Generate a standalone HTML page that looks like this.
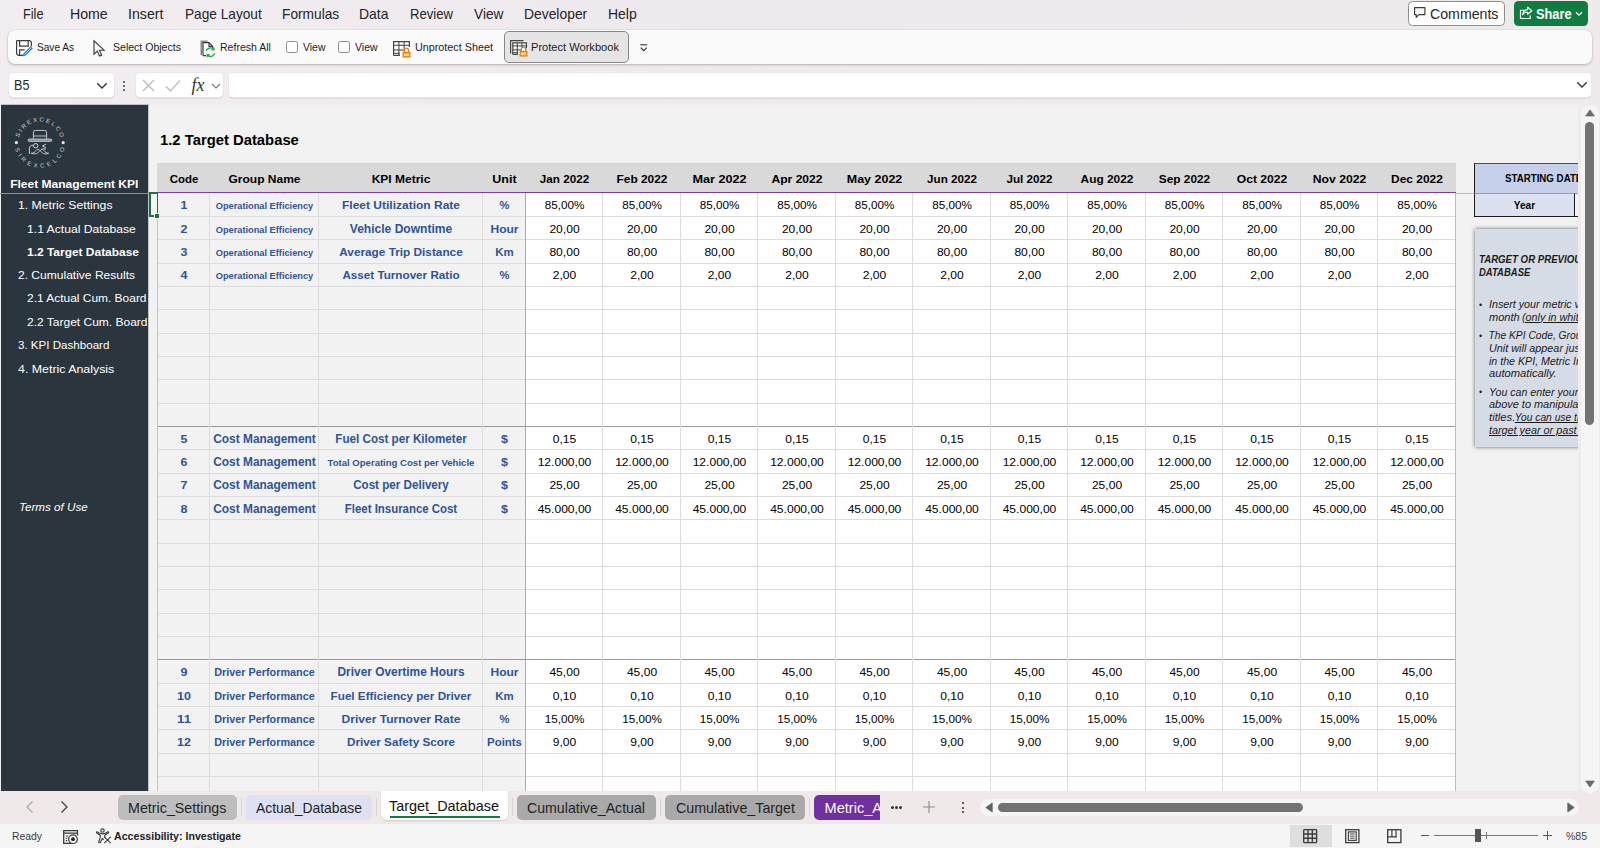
<!DOCTYPE html><html><head><meta charset="utf-8"><title>Fleet Management KPI - Target Database</title><style>
html,body{margin:0;padding:0}
body{width:1600px;height:848px;overflow:hidden;position:relative;background:#efeaec;font-family:"Liberation Sans",sans-serif;}
div{position:absolute;box-sizing:border-box}
svg{position:absolute;overflow:visible}
.t{white-space:pre;overflow:visible}
</style></head><body>
<div style="left:0px;top:0px;width:1600px;height:105px;background:linear-gradient(90deg,#f1edf0 0%,#eee9ed 45%,#efeaeb 100%);"></div>
<div class="t" style="left:22.5px;top:3px;width:100px;height:22px;line-height:22px;font-size:14.4px;color:#242424;transform:scaleX(0.8835);transform-origin:0 50%;">File</div>
<div class="t" style="left:70.25px;top:3px;width:100px;height:22px;line-height:22px;font-size:14.4px;color:#242424;transform:scaleX(0.9827);transform-origin:0 50%;">Home</div>
<div class="t" style="left:128.25px;top:3px;width:100px;height:22px;line-height:22px;font-size:14.4px;color:#242424;transform:scaleX(0.9857);transform-origin:0 50%;">Insert</div>
<div class="t" style="left:184.5px;top:3px;width:100px;height:22px;line-height:22px;font-size:14.4px;color:#242424;transform:scaleX(0.9491);transform-origin:0 50%;">Page Layout</div>
<div class="t" style="left:282px;top:3px;width:100px;height:22px;line-height:22px;font-size:14.4px;color:#242424;transform:scaleX(0.9539);transform-origin:0 50%;">Formulas</div>
<div class="t" style="left:359.25px;top:3px;width:100px;height:22px;line-height:22px;font-size:14.4px;color:#242424;transform:scaleX(0.9698);transform-origin:0 50%;">Data</div>
<div class="t" style="left:409.5px;top:3px;width:100px;height:22px;line-height:22px;font-size:14.4px;color:#242424;transform:scaleX(0.9107);transform-origin:0 50%;">Review</div>
<div class="t" style="left:473.75px;top:3px;width:100px;height:22px;line-height:22px;font-size:14.4px;color:#242424;transform:scaleX(0.9531);transform-origin:0 50%;">View</div>
<div class="t" style="left:523.75px;top:3px;width:100px;height:22px;line-height:22px;font-size:14.4px;color:#242424;transform:scaleX(0.9636);transform-origin:0 50%;">Developer</div>
<div class="t" style="left:607.5px;top:3px;width:100px;height:22px;line-height:22px;font-size:14.4px;color:#242424;transform:scaleX(0.9707);transform-origin:0 50%;">Help</div>
<div style="left:1407.5px;top:1px;width:97.5px;height:25px;background:#fff;border:1px solid #8f8f8f;border-radius:4.5px;"></div>
<svg style="left:1412.5px;top:6px" width="14" height="14" viewBox="0 0 14 14"><path d="M1.6 1.6h10.300v7h-6l-2.700 2.700v-2.700h-1.600z" fill="none" stroke="#3a3a3a" stroke-width="1.15" stroke-linejoin="round"/></svg>
<div class="t" style="left:1429.5px;top:3px;width:80px;height:22px;line-height:22px;font-size:14.4px;color:#262626;transform:scaleX(0.9839);transform-origin:0 50%;">Comments</div>
<div style="left:1513.5px;top:1px;width:74.5px;height:25px;background:#107c41;border-radius:4.5px;"></div>
<svg style="left:1518px;top:5px" width="16" height="16" viewBox="0 0 16 16"><path d="M6.2 5.2h-3.7v8.3h9.7v-3.2" fill="none" stroke="#fff" stroke-width="1.15" stroke-linejoin="round"/><path d="M9.6 2.2l4.3 3.5-4.3 3.5v-2.1c-2.4 0-3.9.8-4.9 2.6.3-3.2 2-5 4.9-5.3z" fill="none" stroke="#fff" stroke-width="1.15" stroke-linejoin="round"/></svg>
<div class="t" style="left:1535.5px;top:3px;width:40px;height:22px;line-height:22px;font-size:14.4px;color:#fff;font-weight:700;transform:scaleX(0.8870);transform-origin:0 50%;">Share</div>
<svg style="left:1575px;top:10.5px" width="8" height="6" viewBox="0 0 8 6"><path d="M1 1.2l3 3 3-3" fill="none" stroke="#fff" stroke-width="1.3"/></svg>
<div style="left:8px;top:30px;width:1584px;height:34px;background:#fbfafa;border-radius:7px;box-shadow:0 1px 2.5px rgba(60,30,40,.28),0 0 1px rgba(60,30,40,.2);"></div>
<div style="left:504px;top:31px;width:125px;height:32px;background:#e5e5e5;border:1px solid #868686;border-radius:5px;"></div>
<div class="t" style="left:36.9px;top:36px;width:140px;height:22px;line-height:22px;font-size:10.9px;color:#1c1c1c;transform:scaleX(0.9277);transform-origin:0 50%;">Save As</div>
<div class="t" style="left:112.5px;top:36px;width:140px;height:22px;line-height:22px;font-size:10.9px;color:#1c1c1c;transform:scaleX(0.9676);transform-origin:0 50%;">Select Objects</div>
<div class="t" style="left:219.6px;top:36px;width:140px;height:22px;line-height:22px;font-size:10.9px;color:#1c1c1c;transform:scaleX(0.9676);transform-origin:0 50%;">Refresh All</div>
<div class="t" style="left:302.5px;top:36px;width:140px;height:22px;line-height:22px;font-size:10.9px;color:#1c1c1c;transform:scaleX(0.9603);transform-origin:0 50%;">View</div>
<div class="t" style="left:355px;top:36px;width:140px;height:22px;line-height:22px;font-size:10.9px;color:#1c1c1c;transform:scaleX(0.9646);transform-origin:0 50%;">View</div>
<div class="t" style="left:414.5px;top:36px;width:140px;height:22px;line-height:22px;font-size:10.9px;color:#1c1c1c;transform:scaleX(0.9902);transform-origin:0 50%;">Unprotect Sheet</div>
<div class="t" style="left:531px;top:36px;width:140px;height:22px;line-height:22px;font-size:10.9px;color:#1c1c1c;transform:scaleX(1.0182);transform-origin:0 50%;">Protect Workbook</div>
<svg style="left:16px;top:40px" width="17" height="17" viewBox="0 0 17 17"><path d="M0.6 0.6h13.2l1.6 1.6v4.2M8 15.4H2.2L0.6 13.8V0.6" fill="none" stroke="#3b3b3b" stroke-width="1.2" stroke-linejoin="round"/><path d="M3.6 0.6v5.6h8.6V0.6" fill="none" stroke="#3b3b3b" stroke-width="1.2"/><path d="M3.6 15.2v-5.4h5" fill="none" stroke="#3b3b3b" stroke-width="1.2"/><path d="M6.6 16.4l1-3.2 7-7 2.2 2.2-7 7z" fill="#2b88d8"/><path d="M8.6 14.4l6.6-6.6" stroke="#d9ecfb" stroke-width="0.7"/></svg>
<svg style="left:93px;top:40px" width="13" height="17" viewBox="0 0 13 17"><path d="M1 0.9v13.2l3.3-3 2.2 5 2.2-1-2.2-4.9h4.6z" fill="none" stroke="#3b3b3b" stroke-width="1.15" stroke-linejoin="miter"/></svg>
<svg style="left:200px;top:40px" width="16" height="18" viewBox="0 0 16 18"><path d="M0.5 0.5h7v1.6H2.3v13.2H0.5z" fill="#8a8a8a"/><path d="M3 15.6V2.6h6l3.6 3.6v2.2M9 2.6v3.8h3.6M3 15.6h3" fill="none" stroke="#3b3b3b" stroke-width="1.15"/><path d="M6.2 11.2a4.3 4.3 0 0 1 7.6-1.6M13.9 7.2v2.6h-2.6M14.8 13.2a4.3 4.3 0 0 1-7.6 1.6M7.1 17.2v-2.6h2.6" fill="none" stroke="#2ea44f" stroke-width="1.3"/></svg>
<div style="left:286px;top:41px;width:12px;height:12px;background:#fff;border:1px solid #8c8c8c;border-radius:2.5px;"></div>
<div style="left:338px;top:41px;width:12px;height:12px;background:#fff;border:1px solid #8c8c8c;border-radius:2.5px;"></div>
<svg style="left:393px;top:41px" width="18" height="17" viewBox="0 0 18 17"><g transform="translate(0,0)"><rect x="0.6" y="0.6" width="15.8" height="13.8" fill="#fff"/><path d="M0.6 14.4V0.6H16.4V6M0.6 14.4H7.0" fill="none" stroke="#454545" stroke-width="1.25"/><path d="M5.9 0.6V14.4M11.1 0.6V8" stroke="#454545" stroke-width="1.05"/><path d="M0.6 4.3H16.4" stroke="#454545" stroke-width="1.05"/><path d="M0.6 9.0H11.1" stroke="#454545" stroke-width="1.05"/><path d="M0.6 12.3H6.9" stroke="#454545" stroke-width="1.05"/></g><path d="M11.300 11.500V9.200a2.150 2.150 0 0 1 4.300 0v2.300" fill="#fff" stroke="#e8780c" stroke-width="1.35"/><rect x="10.200" y="11.600" width="6.600" height="4.300" fill="#fbd98a" stroke="#e8780c" stroke-width="1.3"/></svg>
<svg style="left:510px;top:40px" width="18" height="17" viewBox="0 0 18 17"><path d="M0.6 13.500V0.6H13.500" fill="none" stroke="#454545" stroke-width="1.2"/><g transform="translate(2.2,2.2)"><rect x="0.6" y="0.6" width="13.6" height="11.6" fill="#fff"/><path d="M0.6 12.2V0.6H14.2V6M0.6 12.2H5.9" fill="none" stroke="#454545" stroke-width="1.25"/><path d="M5.1 0.6V12.2M9.7 0.6V8" stroke="#454545" stroke-width="1.05"/><path d="M0.6 3.7H14.2" stroke="#454545" stroke-width="1.05"/><path d="M0.6 7.7H9.7" stroke="#454545" stroke-width="1.05"/><path d="M0.6 10.5H6.1" stroke="#454545" stroke-width="1.05"/></g><path d="M11.300 11.500V9.200a2.150 2.150 0 0 1 4.300 0v2.300" fill="#fff" stroke="#e8780c" stroke-width="1.35"/><rect x="10.200" y="11.600" width="6.600" height="4.300" fill="#fbd98a" stroke="#e8780c" stroke-width="1.3"/></svg>
<svg style="left:640px;top:43.5px" width="8" height="8" viewBox="0 0 8 8"><path d="M0.3 0.8h6.900" stroke="#333" stroke-width="1.1"/><path d="M0.700 3.600l3.050 3.050 3.050-3.050" fill="none" stroke="#333" stroke-width="1.2"/></svg>
<div style="left:9px;top:73px;width:104.5px;height:24px;background:#fff;border-radius:4px;box-shadow:0 0 0 1px #ebe6e7,0 1px 0 0.5px #cbc6c7;"></div>
<div class="t" style="left:14.3px;top:75px;width:40px;height:22px;line-height:22px;font-size:13.8px;color:#262626;transform:scaleX(0.9123);transform-origin:0 50%;">B5</div>
<svg style="left:96px;top:82px" width="12" height="8" viewBox="0 0 12 8"><path d="M1.2 1.2l4.8 4.8 4.8-4.8" fill="none" stroke="#333" stroke-width="1.3"/></svg>
<div style="left:123px;top:81px;width:2.2px;height:2.2px;background:#444;border-radius:1.1px;"></div>
<div style="left:123px;top:85px;width:2.2px;height:2.2px;background:#444;border-radius:1.1px;"></div>
<div style="left:123px;top:89px;width:2.2px;height:2.2px;background:#444;border-radius:1.1px;"></div>
<div style="left:136px;top:73px;width:87px;height:24px;background:#fff;border-radius:4px;box-shadow:0 0 0 1px #ebe6e7,0 1px 0 0.5px #cbc6c7;"></div>
<svg style="left:142px;top:79px" width="13" height="13" viewBox="0 0 13 13"><path d="M1 1l11 11M12 1L1 12" fill="none" stroke="#b9b9b9" stroke-width="1.2"/></svg>
<svg style="left:165px;top:79px" width="16" height="13" viewBox="0 0 16 13"><path d="M1 7.5l4.5 4.5L15 1.5" fill="none" stroke="#b9b9b9" stroke-width="1.2"/></svg>
<div class="t" style="left:191.5px;top:73px;width:20px;height:24px;line-height:24px;font-size:18px;color:#333;font-style:italic;font-family:'Liberation Serif',serif;">fx</div>
<svg style="left:211px;top:83px" width="10" height="7" viewBox="0 0 10 7"><path d="M1 1l4 4 4-4" fill="none" stroke="#777" stroke-width="1.1"/></svg>
<div style="left:229px;top:73px;width:1362px;height:24px;background:#fff;border-radius:4px;box-shadow:0 0 0 1px #ebe6e7,0 1px 0 0.5px #cbc6c7;"></div>
<svg style="left:1576px;top:81px" width="12" height="8" viewBox="0 0 12 8"><path d="M1.2 1.2l4.8 4.8 4.8-4.8" fill="none" stroke="#333" stroke-width="1.3"/></svg>
<div style="left:0px;top:105px;width:1578px;height:686px;background:#f2f2f2;"></div>
<div style="left:1px;top:104px;width:148px;height:1px;background:#c3c2c6;"></div>
<div style="left:149px;top:104px;width:1429px;height:1px;background:#f1eeef;"></div>
<div style="left:148px;top:105px;width:1px;height:686px;background:#c2c5c8;"></div>
<div style="left:1px;top:105px;width:147px;height:686px;background:#2b353e;"></div>
<div style="left:0px;top:193px;width:149px;height:1px;background:#8c9094;"></div>
<svg style="left:0;top:0" width="150" height="200" viewBox="0 0 150 200"><defs><path id="arcT" d="M18.70 142.60A21.1 21.1 0 0 1 60.90 142.60"/><path id="arcB" d="M14.60 142.60A25.20 25.20 0 0 0 65.00 142.60"/></defs><text font-family="Liberation Sans, sans-serif" font-size="5.9" fill="#cfd3d6" letter-spacing="1.95" text-anchor="middle"><textPath href="#arcT" startOffset="51.3%">SIREXCELCO</textPath></text><text font-family="Liberation Sans, sans-serif" font-size="5.9" fill="#cfd3d6" letter-spacing="3.25" text-anchor="middle"><textPath href="#arcB" startOffset="52.6%">SIREXCELCO</textPath></text><circle cx="16.4" cy="142.6" r="1.6" fill="#e6e8ea"/><circle cx="63.199999999999996" cy="142.6" r="1.6" fill="#e6e8ea"/><path d="M33.4 138.8v-6.6a1.8 1.8 0 0 1 1.8-1.8h9.6a1.8 1.8 0 0 1 1.8 1.8v6.6M33.4 136h13.2" fill="none" stroke="#cfd3d6" stroke-width="0.9"/><rect x="28" y="139" width="23.8" height="2.4" rx="1.2" fill="#8d949a" stroke="#cfd3d6" stroke-width="0.8"/><circle cx="35.7" cy="145.7" r="2.2" fill="none" stroke="#cfd3d6" stroke-width="1"/><path d="M33.5 145.3c-2.700-.3-4.100 1-4.100 3.400v5.300" fill="none" stroke="#cfd3d6" stroke-width="1"/><path d="M45.900 144.200l-3.400 1.800 3.400 1.800M42.800 148.600l3 .6" fill="none" stroke="#cfd3d6" stroke-width="1"/><path d="M39.500 150.600c-.6 2.400-4.400 4.400-8.200 2.600 2.200 0 3.600-1 4.600-2.600 1.200-1.800 3.200-1.800 3.600 0zM40.500 150.600c.6 2.400 4.400 4.400 8.200 2.600-2.200 0-3.600-1-4.600-2.600-1.200-1.800-3.200-1.800-3.600 0z" fill="none" stroke="#cfd3d6" stroke-width="0.9" stroke-linejoin="round"/></svg>
<div class="t" style="left:0px;top:174px;width:148.5px;height:20px;line-height:20px;font-size:11.44px;color:#fff;text-align:center;font-weight:700;transform:scaleX(1.0506);transform-origin:50% 50%;">Fleet Management KPI</div>
<div class="t" style="left:17.9px;top:194px;width:130px;height:23px;line-height:23px;font-size:11.44px;color:#fff;transform:scaleX(1.0695);transform-origin:0 50%;">1. Metric Settings</div>
<div class="t" style="left:27.2px;top:218px;width:130px;height:23px;line-height:23px;font-size:11.44px;color:#fff;transform:scaleX(1.0623);transform-origin:0 50%;">1.1 Actual Database</div>
<div class="t" style="left:27.2px;top:241px;width:130px;height:23px;line-height:23px;font-size:11.44px;color:#fff;font-weight:700;transform:scaleX(1.0445);transform-origin:0 50%;">1.2 Target Database</div>
<div class="t" style="left:17.9px;top:264px;width:130px;height:23px;line-height:23px;font-size:11.44px;color:#fff;transform:scaleX(1.0517);transform-origin:0 50%;">2. Cumulative Results</div>
<div class="t" style="left:27.2px;top:287px;width:130px;height:23px;line-height:23px;font-size:11.44px;color:#fff;transform:scaleX(1.0442);transform-origin:0 50%;">2.1 Actual Cum. Board</div>
<div class="t" style="left:27.2px;top:311px;width:130px;height:23px;line-height:23px;font-size:11.44px;color:#fff;transform:scaleX(1.0491);transform-origin:0 50%;">2.2 Target Cum. Board</div>
<div class="t" style="left:17.8px;top:334px;width:130px;height:23px;line-height:23px;font-size:11.44px;color:#fff;transform:scaleX(1.0124);transform-origin:0 50%;">3. KPI Dashboard</div>
<div class="t" style="left:17.8px;top:358px;width:130px;height:23px;line-height:23px;font-size:11.44px;color:#fff;transform:scaleX(1.0822);transform-origin:0 50%;">4. Metric Analysis</div>
<div class="t" style="left:18.5px;top:496px;width:100px;height:22px;line-height:22px;font-size:11.44px;color:#fff;font-style:italic;transform:scaleX(1.0160);transform-origin:0 50%;">Terms of Use</div>
<div class="t" style="left:160px;top:128px;width:200px;height:24px;line-height:24px;font-size:14.64px;color:#000;font-weight:700;transform:scaleX(1.0128);transform-origin:0 50%;">1.2 Target Database</div>
<div style="left:525px;top:193px;width:930px;height:598px;background:#fff;"></div>
<div style="left:157px;top:163px;width:1299px;height:30px;background:#d9d9d9;"></div>
<div style="left:157px;top:192px;width:1299px;height:1px;background:#7a3fa6;"></div>
<div class="t" style="left:158px;top:167px;width:52px;height:24px;line-height:24px;font-size:11.44px;color:#000;text-align:center;font-weight:700;">Code</div>
<div class="t" style="left:210px;top:167px;width:109px;height:24px;line-height:24px;font-size:11.44px;color:#000;text-align:center;font-weight:700;transform:scaleX(1.0495);transform-origin:50% 50%;">Group Name</div>
<div class="t" style="left:319px;top:167px;width:164px;height:24px;line-height:24px;font-size:11.44px;color:#000;text-align:center;font-weight:700;transform:scaleX(1.0496);transform-origin:50% 50%;">KPI Metric</div>
<div class="t" style="left:483px;top:167px;width:43px;height:24px;line-height:24px;font-size:11.44px;color:#000;text-align:center;font-weight:700;transform:scaleX(1.0919);transform-origin:50% 50%;">Unit</div>
<div class="t" style="left:526px;top:167px;width:77px;height:24px;line-height:24px;font-size:11.44px;color:#000;text-align:center;font-weight:700;transform:scaleX(1.0191);transform-origin:50% 50%;">Jan 2022</div>
<div class="t" style="left:603px;top:167px;width:78px;height:24px;line-height:24px;font-size:11.44px;color:#000;text-align:center;font-weight:700;transform:scaleX(1.0403);transform-origin:50% 50%;">Feb 2022</div>
<div class="t" style="left:681px;top:167px;width:77px;height:24px;line-height:24px;font-size:11.44px;color:#000;text-align:center;font-weight:700;transform:scaleX(1.1066);transform-origin:50% 50%;">Mar 2022</div>
<div class="t" style="left:758px;top:167px;width:78px;height:24px;line-height:24px;font-size:11.44px;color:#000;text-align:center;font-weight:700;transform:scaleX(1.0579);transform-origin:50% 50%;">Apr 2022</div>
<div class="t" style="left:836px;top:167px;width:77px;height:24px;line-height:24px;font-size:11.44px;color:#000;text-align:center;font-weight:700;transform:scaleX(1.0919);transform-origin:50% 50%;">May 2022</div>
<div class="t" style="left:913px;top:167px;width:78px;height:24px;line-height:24px;font-size:11.44px;color:#000;text-align:center;font-weight:700;transform:scaleX(1.0180);transform-origin:50% 50%;">Jun 2022</div>
<div class="t" style="left:991px;top:167px;width:77px;height:24px;line-height:24px;font-size:11.44px;color:#000;text-align:center;font-weight:700;transform:scaleX(1.0161);transform-origin:50% 50%;">Jul 2022</div>
<div class="t" style="left:1068px;top:167px;width:78px;height:24px;line-height:24px;font-size:11.44px;color:#000;text-align:center;font-weight:700;transform:scaleX(1.0369);transform-origin:50% 50%;">Aug 2022</div>
<div class="t" style="left:1146px;top:167px;width:77px;height:24px;line-height:24px;font-size:11.44px;color:#000;text-align:center;font-weight:700;transform:scaleX(1.0346);transform-origin:50% 50%;">Sep 2022</div>
<div class="t" style="left:1223px;top:167px;width:78px;height:24px;line-height:24px;font-size:11.44px;color:#000;text-align:center;font-weight:700;transform:scaleX(1.0557);transform-origin:50% 50%;">Oct 2022</div>
<div class="t" style="left:1301px;top:167px;width:77px;height:24px;line-height:24px;font-size:11.44px;color:#000;text-align:center;font-weight:700;transform:scaleX(1.0633);transform-origin:50% 50%;">Nov 2022</div>
<div class="t" style="left:1378px;top:167px;width:78px;height:24px;line-height:24px;font-size:11.44px;color:#000;text-align:center;font-weight:700;transform:scaleX(1.0454);transform-origin:50% 50%;">Dec 2022</div>
<div style="left:157px;top:216px;width:1299px;height:1px;background:#dcdcdc;"></div>
<div style="left:157px;top:239px;width:1299px;height:1px;background:#dcdcdc;"></div>
<div style="left:157px;top:263px;width:1299px;height:1px;background:#dcdcdc;"></div>
<div style="left:157px;top:286px;width:1299px;height:1px;background:#dcdcdc;"></div>
<div style="left:157px;top:309px;width:1299px;height:1px;background:#dcdcdc;"></div>
<div style="left:157px;top:333px;width:1299px;height:1px;background:#dcdcdc;"></div>
<div style="left:157px;top:356px;width:1299px;height:1px;background:#dcdcdc;"></div>
<div style="left:157px;top:379px;width:1299px;height:1px;background:#dcdcdc;"></div>
<div style="left:157px;top:403px;width:1299px;height:1px;background:#dcdcdc;"></div>
<div style="left:157px;top:426px;width:1299px;height:1px;background:#9a9a9a;"></div>
<div style="left:157px;top:449px;width:1299px;height:1px;background:#dcdcdc;"></div>
<div style="left:157px;top:473px;width:1299px;height:1px;background:#dcdcdc;"></div>
<div style="left:157px;top:496px;width:1299px;height:1px;background:#dcdcdc;"></div>
<div style="left:157px;top:519px;width:1299px;height:1px;background:#dcdcdc;"></div>
<div style="left:157px;top:543px;width:1299px;height:1px;background:#dcdcdc;"></div>
<div style="left:157px;top:566px;width:1299px;height:1px;background:#dcdcdc;"></div>
<div style="left:157px;top:589px;width:1299px;height:1px;background:#dcdcdc;"></div>
<div style="left:157px;top:613px;width:1299px;height:1px;background:#dcdcdc;"></div>
<div style="left:157px;top:636px;width:1299px;height:1px;background:#dcdcdc;"></div>
<div style="left:157px;top:659px;width:1299px;height:1px;background:#9a9a9a;"></div>
<div style="left:157px;top:683px;width:1299px;height:1px;background:#dcdcdc;"></div>
<div style="left:157px;top:706px;width:1299px;height:1px;background:#dcdcdc;"></div>
<div style="left:157px;top:729px;width:1299px;height:1px;background:#dcdcdc;"></div>
<div style="left:157px;top:753px;width:1299px;height:1px;background:#dcdcdc;"></div>
<div style="left:157px;top:776px;width:1299px;height:1px;background:#dcdcdc;"></div>
<div style="left:157px;top:193px;width:1px;height:598px;background:#c4c4c4;"></div>
<div style="left:209px;top:193px;width:1px;height:598px;background:#dcdcdc;"></div>
<div style="left:318px;top:193px;width:1px;height:598px;background:#dcdcdc;"></div>
<div style="left:482px;top:193px;width:1px;height:598px;background:#dcdcdc;"></div>
<div style="left:525px;top:193px;width:1px;height:598px;background:#a9a9a9;"></div>
<div style="left:602px;top:193px;width:1px;height:598px;background:#dcdcdc;"></div>
<div style="left:680px;top:193px;width:1px;height:598px;background:#dcdcdc;"></div>
<div style="left:757px;top:193px;width:1px;height:598px;background:#dcdcdc;"></div>
<div style="left:835px;top:193px;width:1px;height:598px;background:#dcdcdc;"></div>
<div style="left:912px;top:193px;width:1px;height:598px;background:#dcdcdc;"></div>
<div style="left:990px;top:193px;width:1px;height:598px;background:#dcdcdc;"></div>
<div style="left:1067px;top:193px;width:1px;height:598px;background:#dcdcdc;"></div>
<div style="left:1145px;top:193px;width:1px;height:598px;background:#dcdcdc;"></div>
<div style="left:1222px;top:193px;width:1px;height:598px;background:#dcdcdc;"></div>
<div style="left:1300px;top:193px;width:1px;height:598px;background:#dcdcdc;"></div>
<div style="left:1377px;top:193px;width:1px;height:598px;background:#dcdcdc;"></div>
<div style="left:1455px;top:193px;width:1px;height:598px;background:#bcbcbc;"></div>
<div class="t" style="left:158px;top:194px;width:52px;height:23px;line-height:23px;font-size:11.44px;color:#2f5496;text-align:center;font-weight:700;transform:scaleX(1.0857);transform-origin:50% 50%;">1</div>
<div class="t" style="left:210px;top:194px;width:109px;height:23px;line-height:23px;font-size:11.44px;color:#2f5496;text-align:center;font-weight:700;transform:scaleX(0.9730);transform-origin:50% 50%;"><span style="font-size:9.49px">Operational Efficiency</span></div>
<div class="t" style="left:319px;top:194px;width:164px;height:23px;line-height:23px;font-size:11.44px;color:#2f5496;text-align:center;font-weight:700;transform:scaleX(1.0490);transform-origin:50% 50%;">Fleet Utilization Rate</div>
<div class="t" style="left:483px;top:194px;width:43px;height:23px;line-height:23px;font-size:11.44px;color:#2f5496;text-align:center;font-weight:700;transform:scaleX(0.9767);transform-origin:50% 50%;">%</div>
<div class="t" style="left:526px;top:194px;width:77px;height:23px;line-height:23px;font-size:11.44px;color:#000;text-align:center;transform:scaleX(1.0219);transform-origin:50% 50%;">85,00%</div>
<div class="t" style="left:603px;top:194px;width:78px;height:23px;line-height:23px;font-size:11.44px;color:#000;text-align:center;transform:scaleX(1.0219);transform-origin:50% 50%;">85,00%</div>
<div class="t" style="left:681px;top:194px;width:77px;height:23px;line-height:23px;font-size:11.44px;color:#000;text-align:center;transform:scaleX(1.0219);transform-origin:50% 50%;">85,00%</div>
<div class="t" style="left:758px;top:194px;width:78px;height:23px;line-height:23px;font-size:11.44px;color:#000;text-align:center;transform:scaleX(1.0219);transform-origin:50% 50%;">85,00%</div>
<div class="t" style="left:836px;top:194px;width:77px;height:23px;line-height:23px;font-size:11.44px;color:#000;text-align:center;transform:scaleX(1.0219);transform-origin:50% 50%;">85,00%</div>
<div class="t" style="left:913px;top:194px;width:78px;height:23px;line-height:23px;font-size:11.44px;color:#000;text-align:center;transform:scaleX(1.0219);transform-origin:50% 50%;">85,00%</div>
<div class="t" style="left:991px;top:194px;width:77px;height:23px;line-height:23px;font-size:11.44px;color:#000;text-align:center;transform:scaleX(1.0219);transform-origin:50% 50%;">85,00%</div>
<div class="t" style="left:1068px;top:194px;width:78px;height:23px;line-height:23px;font-size:11.44px;color:#000;text-align:center;transform:scaleX(1.0219);transform-origin:50% 50%;">85,00%</div>
<div class="t" style="left:1146px;top:194px;width:77px;height:23px;line-height:23px;font-size:11.44px;color:#000;text-align:center;transform:scaleX(1.0219);transform-origin:50% 50%;">85,00%</div>
<div class="t" style="left:1223px;top:194px;width:78px;height:23px;line-height:23px;font-size:11.44px;color:#000;text-align:center;transform:scaleX(1.0219);transform-origin:50% 50%;">85,00%</div>
<div class="t" style="left:1301px;top:194px;width:77px;height:23px;line-height:23px;font-size:11.44px;color:#000;text-align:center;transform:scaleX(1.0219);transform-origin:50% 50%;">85,00%</div>
<div class="t" style="left:1378px;top:194px;width:78px;height:23px;line-height:23px;font-size:11.44px;color:#000;text-align:center;transform:scaleX(1.0219);transform-origin:50% 50%;">85,00%</div>
<div class="t" style="left:158px;top:218px;width:52px;height:23px;line-height:23px;font-size:11.44px;color:#2f5496;text-align:center;font-weight:700;transform:scaleX(1.0857);transform-origin:50% 50%;">2</div>
<div class="t" style="left:210px;top:218px;width:109px;height:23px;line-height:23px;font-size:11.44px;color:#2f5496;text-align:center;font-weight:700;transform:scaleX(0.9730);transform-origin:50% 50%;"><span style="font-size:9.49px">Operational Efficiency</span></div>
<div class="t" style="left:319px;top:218px;width:164px;height:23px;line-height:23px;font-size:11.44px;color:#2f5496;text-align:center;font-weight:700;transform:scaleX(1.0088);transform-origin:50% 50%;"><span style="font-size:11.95px">Vehicle Downtime</span></div>
<div class="t" style="left:483px;top:218px;width:43px;height:23px;line-height:23px;font-size:11.44px;color:#2f5496;text-align:center;font-weight:700;transform:scaleX(1.0521);transform-origin:50% 50%;">Hour</div>
<div class="t" style="left:526px;top:218px;width:77px;height:23px;line-height:23px;font-size:11.44px;color:#000;text-align:center;transform:scaleX(1.0541);transform-origin:50% 50%;">20,00</div>
<div class="t" style="left:603px;top:218px;width:78px;height:23px;line-height:23px;font-size:11.44px;color:#000;text-align:center;transform:scaleX(1.0541);transform-origin:50% 50%;">20,00</div>
<div class="t" style="left:681px;top:218px;width:77px;height:23px;line-height:23px;font-size:11.44px;color:#000;text-align:center;transform:scaleX(1.0541);transform-origin:50% 50%;">20,00</div>
<div class="t" style="left:758px;top:218px;width:78px;height:23px;line-height:23px;font-size:11.44px;color:#000;text-align:center;transform:scaleX(1.0541);transform-origin:50% 50%;">20,00</div>
<div class="t" style="left:836px;top:218px;width:77px;height:23px;line-height:23px;font-size:11.44px;color:#000;text-align:center;transform:scaleX(1.0541);transform-origin:50% 50%;">20,00</div>
<div class="t" style="left:913px;top:218px;width:78px;height:23px;line-height:23px;font-size:11.44px;color:#000;text-align:center;transform:scaleX(1.0541);transform-origin:50% 50%;">20,00</div>
<div class="t" style="left:991px;top:218px;width:77px;height:23px;line-height:23px;font-size:11.44px;color:#000;text-align:center;transform:scaleX(1.0541);transform-origin:50% 50%;">20,00</div>
<div class="t" style="left:1068px;top:218px;width:78px;height:23px;line-height:23px;font-size:11.44px;color:#000;text-align:center;transform:scaleX(1.0541);transform-origin:50% 50%;">20,00</div>
<div class="t" style="left:1146px;top:218px;width:77px;height:23px;line-height:23px;font-size:11.44px;color:#000;text-align:center;transform:scaleX(1.0541);transform-origin:50% 50%;">20,00</div>
<div class="t" style="left:1223px;top:218px;width:78px;height:23px;line-height:23px;font-size:11.44px;color:#000;text-align:center;transform:scaleX(1.0541);transform-origin:50% 50%;">20,00</div>
<div class="t" style="left:1301px;top:218px;width:77px;height:23px;line-height:23px;font-size:11.44px;color:#000;text-align:center;transform:scaleX(1.0541);transform-origin:50% 50%;">20,00</div>
<div class="t" style="left:1378px;top:218px;width:78px;height:23px;line-height:23px;font-size:11.44px;color:#000;text-align:center;transform:scaleX(1.0541);transform-origin:50% 50%;">20,00</div>
<div class="t" style="left:158px;top:241px;width:52px;height:23px;line-height:23px;font-size:11.44px;color:#2f5496;text-align:center;font-weight:700;transform:scaleX(1.0857);transform-origin:50% 50%;">3</div>
<div class="t" style="left:210px;top:241px;width:109px;height:23px;line-height:23px;font-size:11.44px;color:#2f5496;text-align:center;font-weight:700;transform:scaleX(0.9730);transform-origin:50% 50%;"><span style="font-size:9.49px">Operational Efficiency</span></div>
<div class="t" style="left:319px;top:241px;width:164px;height:23px;line-height:23px;font-size:11.44px;color:#2f5496;text-align:center;font-weight:700;transform:scaleX(1.0316);transform-origin:50% 50%;">Average Trip Distance</div>
<div class="t" style="left:483px;top:241px;width:43px;height:23px;line-height:23px;font-size:11.44px;color:#2f5496;text-align:center;font-weight:700;">Km</div>
<div class="t" style="left:526px;top:241px;width:77px;height:23px;line-height:23px;font-size:11.44px;color:#000;text-align:center;transform:scaleX(1.0541);transform-origin:50% 50%;">80,00</div>
<div class="t" style="left:603px;top:241px;width:78px;height:23px;line-height:23px;font-size:11.44px;color:#000;text-align:center;transform:scaleX(1.0541);transform-origin:50% 50%;">80,00</div>
<div class="t" style="left:681px;top:241px;width:77px;height:23px;line-height:23px;font-size:11.44px;color:#000;text-align:center;transform:scaleX(1.0541);transform-origin:50% 50%;">80,00</div>
<div class="t" style="left:758px;top:241px;width:78px;height:23px;line-height:23px;font-size:11.44px;color:#000;text-align:center;transform:scaleX(1.0541);transform-origin:50% 50%;">80,00</div>
<div class="t" style="left:836px;top:241px;width:77px;height:23px;line-height:23px;font-size:11.44px;color:#000;text-align:center;transform:scaleX(1.0541);transform-origin:50% 50%;">80,00</div>
<div class="t" style="left:913px;top:241px;width:78px;height:23px;line-height:23px;font-size:11.44px;color:#000;text-align:center;transform:scaleX(1.0541);transform-origin:50% 50%;">80,00</div>
<div class="t" style="left:991px;top:241px;width:77px;height:23px;line-height:23px;font-size:11.44px;color:#000;text-align:center;transform:scaleX(1.0541);transform-origin:50% 50%;">80,00</div>
<div class="t" style="left:1068px;top:241px;width:78px;height:23px;line-height:23px;font-size:11.44px;color:#000;text-align:center;transform:scaleX(1.0541);transform-origin:50% 50%;">80,00</div>
<div class="t" style="left:1146px;top:241px;width:77px;height:23px;line-height:23px;font-size:11.44px;color:#000;text-align:center;transform:scaleX(1.0541);transform-origin:50% 50%;">80,00</div>
<div class="t" style="left:1223px;top:241px;width:78px;height:23px;line-height:23px;font-size:11.44px;color:#000;text-align:center;transform:scaleX(1.0541);transform-origin:50% 50%;">80,00</div>
<div class="t" style="left:1301px;top:241px;width:77px;height:23px;line-height:23px;font-size:11.44px;color:#000;text-align:center;transform:scaleX(1.0541);transform-origin:50% 50%;">80,00</div>
<div class="t" style="left:1378px;top:241px;width:78px;height:23px;line-height:23px;font-size:11.44px;color:#000;text-align:center;transform:scaleX(1.0541);transform-origin:50% 50%;">80,00</div>
<div class="t" style="left:158px;top:264px;width:52px;height:23px;line-height:23px;font-size:11.44px;color:#2f5496;text-align:center;font-weight:700;transform:scaleX(1.0857);transform-origin:50% 50%;">4</div>
<div class="t" style="left:210px;top:264px;width:109px;height:23px;line-height:23px;font-size:11.44px;color:#2f5496;text-align:center;font-weight:700;transform:scaleX(0.9730);transform-origin:50% 50%;"><span style="font-size:9.49px">Operational Efficiency</span></div>
<div class="t" style="left:319px;top:264px;width:164px;height:23px;line-height:23px;font-size:11.44px;color:#2f5496;text-align:center;font-weight:700;transform:scaleX(1.0204);transform-origin:50% 50%;">Asset Turnover Ratio</div>
<div class="t" style="left:483px;top:264px;width:43px;height:23px;line-height:23px;font-size:11.44px;color:#2f5496;text-align:center;font-weight:700;transform:scaleX(0.9767);transform-origin:50% 50%;">%</div>
<div class="t" style="left:526px;top:264px;width:77px;height:23px;line-height:23px;font-size:11.44px;color:#000;text-align:center;transform:scaleX(1.0536);transform-origin:50% 50%;">2,00</div>
<div class="t" style="left:603px;top:264px;width:78px;height:23px;line-height:23px;font-size:11.44px;color:#000;text-align:center;transform:scaleX(1.0536);transform-origin:50% 50%;">2,00</div>
<div class="t" style="left:681px;top:264px;width:77px;height:23px;line-height:23px;font-size:11.44px;color:#000;text-align:center;transform:scaleX(1.0536);transform-origin:50% 50%;">2,00</div>
<div class="t" style="left:758px;top:264px;width:78px;height:23px;line-height:23px;font-size:11.44px;color:#000;text-align:center;transform:scaleX(1.0536);transform-origin:50% 50%;">2,00</div>
<div class="t" style="left:836px;top:264px;width:77px;height:23px;line-height:23px;font-size:11.44px;color:#000;text-align:center;transform:scaleX(1.0536);transform-origin:50% 50%;">2,00</div>
<div class="t" style="left:913px;top:264px;width:78px;height:23px;line-height:23px;font-size:11.44px;color:#000;text-align:center;transform:scaleX(1.0536);transform-origin:50% 50%;">2,00</div>
<div class="t" style="left:991px;top:264px;width:77px;height:23px;line-height:23px;font-size:11.44px;color:#000;text-align:center;transform:scaleX(1.0536);transform-origin:50% 50%;">2,00</div>
<div class="t" style="left:1068px;top:264px;width:78px;height:23px;line-height:23px;font-size:11.44px;color:#000;text-align:center;transform:scaleX(1.0536);transform-origin:50% 50%;">2,00</div>
<div class="t" style="left:1146px;top:264px;width:77px;height:23px;line-height:23px;font-size:11.44px;color:#000;text-align:center;transform:scaleX(1.0536);transform-origin:50% 50%;">2,00</div>
<div class="t" style="left:1223px;top:264px;width:78px;height:23px;line-height:23px;font-size:11.44px;color:#000;text-align:center;transform:scaleX(1.0536);transform-origin:50% 50%;">2,00</div>
<div class="t" style="left:1301px;top:264px;width:77px;height:23px;line-height:23px;font-size:11.44px;color:#000;text-align:center;transform:scaleX(1.0536);transform-origin:50% 50%;">2,00</div>
<div class="t" style="left:1378px;top:264px;width:78px;height:23px;line-height:23px;font-size:11.44px;color:#000;text-align:center;transform:scaleX(1.0536);transform-origin:50% 50%;">2,00</div>
<div class="t" style="left:158px;top:428px;width:52px;height:23px;line-height:23px;font-size:11.44px;color:#2f5496;text-align:center;font-weight:700;transform:scaleX(1.0857);transform-origin:50% 50%;">5</div>
<div class="t" style="left:210px;top:428px;width:109px;height:23px;line-height:23px;font-size:11.44px;color:#2f5496;text-align:center;font-weight:700;"><span style="font-size:11.91px">Cost Management</span></div>
<div class="t" style="left:319px;top:428px;width:164px;height:23px;line-height:23px;font-size:11.44px;color:#2f5496;text-align:center;font-weight:700;transform:scaleX(0.9755);transform-origin:50% 50%;"><span style="font-size:11.95px">Fuel Cost per Kilometer</span></div>
<div class="t" style="left:483px;top:428px;width:43px;height:23px;line-height:23px;font-size:11.44px;color:#2f5496;text-align:center;font-weight:700;transform:scaleX(1.0857);transform-origin:50% 50%;">$</div>
<div class="t" style="left:526px;top:428px;width:77px;height:23px;line-height:23px;font-size:11.44px;color:#000;text-align:center;transform:scaleX(1.0536);transform-origin:50% 50%;">0,15</div>
<div class="t" style="left:603px;top:428px;width:78px;height:23px;line-height:23px;font-size:11.44px;color:#000;text-align:center;transform:scaleX(1.0536);transform-origin:50% 50%;">0,15</div>
<div class="t" style="left:681px;top:428px;width:77px;height:23px;line-height:23px;font-size:11.44px;color:#000;text-align:center;transform:scaleX(1.0536);transform-origin:50% 50%;">0,15</div>
<div class="t" style="left:758px;top:428px;width:78px;height:23px;line-height:23px;font-size:11.44px;color:#000;text-align:center;transform:scaleX(1.0536);transform-origin:50% 50%;">0,15</div>
<div class="t" style="left:836px;top:428px;width:77px;height:23px;line-height:23px;font-size:11.44px;color:#000;text-align:center;transform:scaleX(1.0536);transform-origin:50% 50%;">0,15</div>
<div class="t" style="left:913px;top:428px;width:78px;height:23px;line-height:23px;font-size:11.44px;color:#000;text-align:center;transform:scaleX(1.0536);transform-origin:50% 50%;">0,15</div>
<div class="t" style="left:991px;top:428px;width:77px;height:23px;line-height:23px;font-size:11.44px;color:#000;text-align:center;transform:scaleX(1.0536);transform-origin:50% 50%;">0,15</div>
<div class="t" style="left:1068px;top:428px;width:78px;height:23px;line-height:23px;font-size:11.44px;color:#000;text-align:center;transform:scaleX(1.0536);transform-origin:50% 50%;">0,15</div>
<div class="t" style="left:1146px;top:428px;width:77px;height:23px;line-height:23px;font-size:11.44px;color:#000;text-align:center;transform:scaleX(1.0536);transform-origin:50% 50%;">0,15</div>
<div class="t" style="left:1223px;top:428px;width:78px;height:23px;line-height:23px;font-size:11.44px;color:#000;text-align:center;transform:scaleX(1.0536);transform-origin:50% 50%;">0,15</div>
<div class="t" style="left:1301px;top:428px;width:77px;height:23px;line-height:23px;font-size:11.44px;color:#000;text-align:center;transform:scaleX(1.0536);transform-origin:50% 50%;">0,15</div>
<div class="t" style="left:1378px;top:428px;width:78px;height:23px;line-height:23px;font-size:11.44px;color:#000;text-align:center;transform:scaleX(1.0536);transform-origin:50% 50%;">0,15</div>
<div class="t" style="left:158px;top:451px;width:52px;height:23px;line-height:23px;font-size:11.44px;color:#2f5496;text-align:center;font-weight:700;transform:scaleX(1.0857);transform-origin:50% 50%;">6</div>
<div class="t" style="left:210px;top:451px;width:109px;height:23px;line-height:23px;font-size:11.44px;color:#2f5496;text-align:center;font-weight:700;"><span style="font-size:11.91px">Cost Management</span></div>
<div class="t" style="left:319px;top:451px;width:164px;height:23px;line-height:23px;font-size:11.44px;color:#2f5496;text-align:center;font-weight:700;transform:scaleX(0.9776);transform-origin:50% 50%;"><span style="font-size:9.78px">Total Operating Cost per Vehicle</span></div>
<div class="t" style="left:483px;top:451px;width:43px;height:23px;line-height:23px;font-size:11.44px;color:#2f5496;text-align:center;font-weight:700;transform:scaleX(1.0857);transform-origin:50% 50%;">$</div>
<div class="t" style="left:526px;top:451px;width:77px;height:23px;line-height:23px;font-size:11.44px;color:#000;text-align:center;transform:scaleX(1.0546);transform-origin:50% 50%;">12.000,00</div>
<div class="t" style="left:603px;top:451px;width:78px;height:23px;line-height:23px;font-size:11.44px;color:#000;text-align:center;transform:scaleX(1.0546);transform-origin:50% 50%;">12.000,00</div>
<div class="t" style="left:681px;top:451px;width:77px;height:23px;line-height:23px;font-size:11.44px;color:#000;text-align:center;transform:scaleX(1.0546);transform-origin:50% 50%;">12.000,00</div>
<div class="t" style="left:758px;top:451px;width:78px;height:23px;line-height:23px;font-size:11.44px;color:#000;text-align:center;transform:scaleX(1.0546);transform-origin:50% 50%;">12.000,00</div>
<div class="t" style="left:836px;top:451px;width:77px;height:23px;line-height:23px;font-size:11.44px;color:#000;text-align:center;transform:scaleX(1.0546);transform-origin:50% 50%;">12.000,00</div>
<div class="t" style="left:913px;top:451px;width:78px;height:23px;line-height:23px;font-size:11.44px;color:#000;text-align:center;transform:scaleX(1.0546);transform-origin:50% 50%;">12.000,00</div>
<div class="t" style="left:991px;top:451px;width:77px;height:23px;line-height:23px;font-size:11.44px;color:#000;text-align:center;transform:scaleX(1.0546);transform-origin:50% 50%;">12.000,00</div>
<div class="t" style="left:1068px;top:451px;width:78px;height:23px;line-height:23px;font-size:11.44px;color:#000;text-align:center;transform:scaleX(1.0546);transform-origin:50% 50%;">12.000,00</div>
<div class="t" style="left:1146px;top:451px;width:77px;height:23px;line-height:23px;font-size:11.44px;color:#000;text-align:center;transform:scaleX(1.0546);transform-origin:50% 50%;">12.000,00</div>
<div class="t" style="left:1223px;top:451px;width:78px;height:23px;line-height:23px;font-size:11.44px;color:#000;text-align:center;transform:scaleX(1.0546);transform-origin:50% 50%;">12.000,00</div>
<div class="t" style="left:1301px;top:451px;width:77px;height:23px;line-height:23px;font-size:11.44px;color:#000;text-align:center;transform:scaleX(1.0546);transform-origin:50% 50%;">12.000,00</div>
<div class="t" style="left:1378px;top:451px;width:78px;height:23px;line-height:23px;font-size:11.44px;color:#000;text-align:center;transform:scaleX(1.0546);transform-origin:50% 50%;">12.000,00</div>
<div class="t" style="left:158px;top:474px;width:52px;height:23px;line-height:23px;font-size:11.44px;color:#2f5496;text-align:center;font-weight:700;transform:scaleX(1.0857);transform-origin:50% 50%;">7</div>
<div class="t" style="left:210px;top:474px;width:109px;height:23px;line-height:23px;font-size:11.44px;color:#2f5496;text-align:center;font-weight:700;"><span style="font-size:11.91px">Cost Management</span></div>
<div class="t" style="left:319px;top:474px;width:164px;height:23px;line-height:23px;font-size:11.44px;color:#2f5496;text-align:center;font-weight:700;transform:scaleX(0.9758);transform-origin:50% 50%;"><span style="font-size:11.93px">Cost per Delivery</span></div>
<div class="t" style="left:483px;top:474px;width:43px;height:23px;line-height:23px;font-size:11.44px;color:#2f5496;text-align:center;font-weight:700;transform:scaleX(1.0857);transform-origin:50% 50%;">$</div>
<div class="t" style="left:526px;top:474px;width:77px;height:23px;line-height:23px;font-size:11.44px;color:#000;text-align:center;transform:scaleX(1.0541);transform-origin:50% 50%;">25,00</div>
<div class="t" style="left:603px;top:474px;width:78px;height:23px;line-height:23px;font-size:11.44px;color:#000;text-align:center;transform:scaleX(1.0541);transform-origin:50% 50%;">25,00</div>
<div class="t" style="left:681px;top:474px;width:77px;height:23px;line-height:23px;font-size:11.44px;color:#000;text-align:center;transform:scaleX(1.0541);transform-origin:50% 50%;">25,00</div>
<div class="t" style="left:758px;top:474px;width:78px;height:23px;line-height:23px;font-size:11.44px;color:#000;text-align:center;transform:scaleX(1.0541);transform-origin:50% 50%;">25,00</div>
<div class="t" style="left:836px;top:474px;width:77px;height:23px;line-height:23px;font-size:11.44px;color:#000;text-align:center;transform:scaleX(1.0541);transform-origin:50% 50%;">25,00</div>
<div class="t" style="left:913px;top:474px;width:78px;height:23px;line-height:23px;font-size:11.44px;color:#000;text-align:center;transform:scaleX(1.0541);transform-origin:50% 50%;">25,00</div>
<div class="t" style="left:991px;top:474px;width:77px;height:23px;line-height:23px;font-size:11.44px;color:#000;text-align:center;transform:scaleX(1.0541);transform-origin:50% 50%;">25,00</div>
<div class="t" style="left:1068px;top:474px;width:78px;height:23px;line-height:23px;font-size:11.44px;color:#000;text-align:center;transform:scaleX(1.0541);transform-origin:50% 50%;">25,00</div>
<div class="t" style="left:1146px;top:474px;width:77px;height:23px;line-height:23px;font-size:11.44px;color:#000;text-align:center;transform:scaleX(1.0541);transform-origin:50% 50%;">25,00</div>
<div class="t" style="left:1223px;top:474px;width:78px;height:23px;line-height:23px;font-size:11.44px;color:#000;text-align:center;transform:scaleX(1.0541);transform-origin:50% 50%;">25,00</div>
<div class="t" style="left:1301px;top:474px;width:77px;height:23px;line-height:23px;font-size:11.44px;color:#000;text-align:center;transform:scaleX(1.0541);transform-origin:50% 50%;">25,00</div>
<div class="t" style="left:1378px;top:474px;width:78px;height:23px;line-height:23px;font-size:11.44px;color:#000;text-align:center;transform:scaleX(1.0541);transform-origin:50% 50%;">25,00</div>
<div class="t" style="left:158px;top:498px;width:52px;height:23px;line-height:23px;font-size:11.44px;color:#2f5496;text-align:center;font-weight:700;transform:scaleX(1.0857);transform-origin:50% 50%;">8</div>
<div class="t" style="left:210px;top:498px;width:109px;height:23px;line-height:23px;font-size:11.44px;color:#2f5496;text-align:center;font-weight:700;"><span style="font-size:11.91px">Cost Management</span></div>
<div class="t" style="left:319px;top:498px;width:164px;height:23px;line-height:23px;font-size:11.44px;color:#2f5496;text-align:center;font-weight:700;transform:scaleX(0.9607);transform-origin:50% 50%;"><span style="font-size:11.9px">Fleet Insurance Cost</span></div>
<div class="t" style="left:483px;top:498px;width:43px;height:23px;line-height:23px;font-size:11.44px;color:#2f5496;text-align:center;font-weight:700;transform:scaleX(1.0857);transform-origin:50% 50%;">$</div>
<div class="t" style="left:526px;top:498px;width:77px;height:23px;line-height:23px;font-size:11.44px;color:#000;text-align:center;transform:scaleX(1.0546);transform-origin:50% 50%;">45.000,00</div>
<div class="t" style="left:603px;top:498px;width:78px;height:23px;line-height:23px;font-size:11.44px;color:#000;text-align:center;transform:scaleX(1.0546);transform-origin:50% 50%;">45.000,00</div>
<div class="t" style="left:681px;top:498px;width:77px;height:23px;line-height:23px;font-size:11.44px;color:#000;text-align:center;transform:scaleX(1.0546);transform-origin:50% 50%;">45.000,00</div>
<div class="t" style="left:758px;top:498px;width:78px;height:23px;line-height:23px;font-size:11.44px;color:#000;text-align:center;transform:scaleX(1.0546);transform-origin:50% 50%;">45.000,00</div>
<div class="t" style="left:836px;top:498px;width:77px;height:23px;line-height:23px;font-size:11.44px;color:#000;text-align:center;transform:scaleX(1.0546);transform-origin:50% 50%;">45.000,00</div>
<div class="t" style="left:913px;top:498px;width:78px;height:23px;line-height:23px;font-size:11.44px;color:#000;text-align:center;transform:scaleX(1.0546);transform-origin:50% 50%;">45.000,00</div>
<div class="t" style="left:991px;top:498px;width:77px;height:23px;line-height:23px;font-size:11.44px;color:#000;text-align:center;transform:scaleX(1.0546);transform-origin:50% 50%;">45.000,00</div>
<div class="t" style="left:1068px;top:498px;width:78px;height:23px;line-height:23px;font-size:11.44px;color:#000;text-align:center;transform:scaleX(1.0546);transform-origin:50% 50%;">45.000,00</div>
<div class="t" style="left:1146px;top:498px;width:77px;height:23px;line-height:23px;font-size:11.44px;color:#000;text-align:center;transform:scaleX(1.0546);transform-origin:50% 50%;">45.000,00</div>
<div class="t" style="left:1223px;top:498px;width:78px;height:23px;line-height:23px;font-size:11.44px;color:#000;text-align:center;transform:scaleX(1.0546);transform-origin:50% 50%;">45.000,00</div>
<div class="t" style="left:1301px;top:498px;width:77px;height:23px;line-height:23px;font-size:11.44px;color:#000;text-align:center;transform:scaleX(1.0546);transform-origin:50% 50%;">45.000,00</div>
<div class="t" style="left:1378px;top:498px;width:78px;height:23px;line-height:23px;font-size:11.44px;color:#000;text-align:center;transform:scaleX(1.0546);transform-origin:50% 50%;">45.000,00</div>
<div class="t" style="left:158px;top:661px;width:52px;height:23px;line-height:23px;font-size:11.44px;color:#2f5496;text-align:center;font-weight:700;transform:scaleX(1.0857);transform-origin:50% 50%;">9</div>
<div class="t" style="left:210px;top:661px;width:109px;height:23px;line-height:23px;font-size:11.44px;color:#2f5496;text-align:center;font-weight:700;transform:scaleX(0.9919);transform-origin:50% 50%;"><span style="font-size:10.92px">Driver Performance</span></div>
<div class="t" style="left:319px;top:661px;width:164px;height:23px;line-height:23px;font-size:11.44px;color:#2f5496;text-align:center;font-weight:700;transform:scaleX(0.9946);transform-origin:50% 50%;"><span style="font-size:11.97px">Driver Overtime Hours</span></div>
<div class="t" style="left:483px;top:661px;width:43px;height:23px;line-height:23px;font-size:11.44px;color:#2f5496;text-align:center;font-weight:700;transform:scaleX(1.0521);transform-origin:50% 50%;">Hour</div>
<div class="t" style="left:526px;top:661px;width:77px;height:23px;line-height:23px;font-size:11.44px;color:#000;text-align:center;transform:scaleX(1.0541);transform-origin:50% 50%;">45,00</div>
<div class="t" style="left:603px;top:661px;width:78px;height:23px;line-height:23px;font-size:11.44px;color:#000;text-align:center;transform:scaleX(1.0541);transform-origin:50% 50%;">45,00</div>
<div class="t" style="left:681px;top:661px;width:77px;height:23px;line-height:23px;font-size:11.44px;color:#000;text-align:center;transform:scaleX(1.0541);transform-origin:50% 50%;">45,00</div>
<div class="t" style="left:758px;top:661px;width:78px;height:23px;line-height:23px;font-size:11.44px;color:#000;text-align:center;transform:scaleX(1.0541);transform-origin:50% 50%;">45,00</div>
<div class="t" style="left:836px;top:661px;width:77px;height:23px;line-height:23px;font-size:11.44px;color:#000;text-align:center;transform:scaleX(1.0541);transform-origin:50% 50%;">45,00</div>
<div class="t" style="left:913px;top:661px;width:78px;height:23px;line-height:23px;font-size:11.44px;color:#000;text-align:center;transform:scaleX(1.0541);transform-origin:50% 50%;">45,00</div>
<div class="t" style="left:991px;top:661px;width:77px;height:23px;line-height:23px;font-size:11.44px;color:#000;text-align:center;transform:scaleX(1.0541);transform-origin:50% 50%;">45,00</div>
<div class="t" style="left:1068px;top:661px;width:78px;height:23px;line-height:23px;font-size:11.44px;color:#000;text-align:center;transform:scaleX(1.0541);transform-origin:50% 50%;">45,00</div>
<div class="t" style="left:1146px;top:661px;width:77px;height:23px;line-height:23px;font-size:11.44px;color:#000;text-align:center;transform:scaleX(1.0541);transform-origin:50% 50%;">45,00</div>
<div class="t" style="left:1223px;top:661px;width:78px;height:23px;line-height:23px;font-size:11.44px;color:#000;text-align:center;transform:scaleX(1.0541);transform-origin:50% 50%;">45,00</div>
<div class="t" style="left:1301px;top:661px;width:77px;height:23px;line-height:23px;font-size:11.44px;color:#000;text-align:center;transform:scaleX(1.0541);transform-origin:50% 50%;">45,00</div>
<div class="t" style="left:1378px;top:661px;width:78px;height:23px;line-height:23px;font-size:11.44px;color:#000;text-align:center;transform:scaleX(1.0541);transform-origin:50% 50%;">45,00</div>
<div class="t" style="left:158px;top:685px;width:52px;height:23px;line-height:23px;font-size:11.44px;color:#2f5496;text-align:center;font-weight:700;transform:scaleX(1.0857);transform-origin:50% 50%;">10</div>
<div class="t" style="left:210px;top:685px;width:109px;height:23px;line-height:23px;font-size:11.44px;color:#2f5496;text-align:center;font-weight:700;transform:scaleX(0.9919);transform-origin:50% 50%;"><span style="font-size:10.92px">Driver Performance</span></div>
<div class="t" style="left:319px;top:685px;width:164px;height:23px;line-height:23px;font-size:11.44px;color:#2f5496;text-align:center;font-weight:700;transform:scaleX(1.0204);transform-origin:50% 50%;">Fuel Efficiency per Driver</div>
<div class="t" style="left:483px;top:685px;width:43px;height:23px;line-height:23px;font-size:11.44px;color:#2f5496;text-align:center;font-weight:700;">Km</div>
<div class="t" style="left:526px;top:685px;width:77px;height:23px;line-height:23px;font-size:11.44px;color:#000;text-align:center;transform:scaleX(1.0536);transform-origin:50% 50%;">0,10</div>
<div class="t" style="left:603px;top:685px;width:78px;height:23px;line-height:23px;font-size:11.44px;color:#000;text-align:center;transform:scaleX(1.0536);transform-origin:50% 50%;">0,10</div>
<div class="t" style="left:681px;top:685px;width:77px;height:23px;line-height:23px;font-size:11.44px;color:#000;text-align:center;transform:scaleX(1.0536);transform-origin:50% 50%;">0,10</div>
<div class="t" style="left:758px;top:685px;width:78px;height:23px;line-height:23px;font-size:11.44px;color:#000;text-align:center;transform:scaleX(1.0536);transform-origin:50% 50%;">0,10</div>
<div class="t" style="left:836px;top:685px;width:77px;height:23px;line-height:23px;font-size:11.44px;color:#000;text-align:center;transform:scaleX(1.0536);transform-origin:50% 50%;">0,10</div>
<div class="t" style="left:913px;top:685px;width:78px;height:23px;line-height:23px;font-size:11.44px;color:#000;text-align:center;transform:scaleX(1.0536);transform-origin:50% 50%;">0,10</div>
<div class="t" style="left:991px;top:685px;width:77px;height:23px;line-height:23px;font-size:11.44px;color:#000;text-align:center;transform:scaleX(1.0536);transform-origin:50% 50%;">0,10</div>
<div class="t" style="left:1068px;top:685px;width:78px;height:23px;line-height:23px;font-size:11.44px;color:#000;text-align:center;transform:scaleX(1.0536);transform-origin:50% 50%;">0,10</div>
<div class="t" style="left:1146px;top:685px;width:77px;height:23px;line-height:23px;font-size:11.44px;color:#000;text-align:center;transform:scaleX(1.0536);transform-origin:50% 50%;">0,10</div>
<div class="t" style="left:1223px;top:685px;width:78px;height:23px;line-height:23px;font-size:11.44px;color:#000;text-align:center;transform:scaleX(1.0536);transform-origin:50% 50%;">0,10</div>
<div class="t" style="left:1301px;top:685px;width:77px;height:23px;line-height:23px;font-size:11.44px;color:#000;text-align:center;transform:scaleX(1.0536);transform-origin:50% 50%;">0,10</div>
<div class="t" style="left:1378px;top:685px;width:78px;height:23px;line-height:23px;font-size:11.44px;color:#000;text-align:center;transform:scaleX(1.0536);transform-origin:50% 50%;">0,10</div>
<div class="t" style="left:158px;top:708px;width:52px;height:23px;line-height:23px;font-size:11.44px;color:#2f5496;text-align:center;font-weight:700;transform:scaleX(1.1423);transform-origin:50% 50%;">11</div>
<div class="t" style="left:210px;top:708px;width:109px;height:23px;line-height:23px;font-size:11.44px;color:#2f5496;text-align:center;font-weight:700;transform:scaleX(0.9919);transform-origin:50% 50%;"><span style="font-size:10.92px">Driver Performance</span></div>
<div class="t" style="left:319px;top:708px;width:164px;height:23px;line-height:23px;font-size:11.44px;color:#2f5496;text-align:center;font-weight:700;transform:scaleX(1.0537);transform-origin:50% 50%;">Driver Turnover Rate</div>
<div class="t" style="left:483px;top:708px;width:43px;height:23px;line-height:23px;font-size:11.44px;color:#2f5496;text-align:center;font-weight:700;transform:scaleX(0.9767);transform-origin:50% 50%;">%</div>
<div class="t" style="left:526px;top:708px;width:77px;height:23px;line-height:23px;font-size:11.44px;color:#000;text-align:center;transform:scaleX(1.0219);transform-origin:50% 50%;">15,00%</div>
<div class="t" style="left:603px;top:708px;width:78px;height:23px;line-height:23px;font-size:11.44px;color:#000;text-align:center;transform:scaleX(1.0219);transform-origin:50% 50%;">15,00%</div>
<div class="t" style="left:681px;top:708px;width:77px;height:23px;line-height:23px;font-size:11.44px;color:#000;text-align:center;transform:scaleX(1.0219);transform-origin:50% 50%;">15,00%</div>
<div class="t" style="left:758px;top:708px;width:78px;height:23px;line-height:23px;font-size:11.44px;color:#000;text-align:center;transform:scaleX(1.0219);transform-origin:50% 50%;">15,00%</div>
<div class="t" style="left:836px;top:708px;width:77px;height:23px;line-height:23px;font-size:11.44px;color:#000;text-align:center;transform:scaleX(1.0219);transform-origin:50% 50%;">15,00%</div>
<div class="t" style="left:913px;top:708px;width:78px;height:23px;line-height:23px;font-size:11.44px;color:#000;text-align:center;transform:scaleX(1.0219);transform-origin:50% 50%;">15,00%</div>
<div class="t" style="left:991px;top:708px;width:77px;height:23px;line-height:23px;font-size:11.44px;color:#000;text-align:center;transform:scaleX(1.0219);transform-origin:50% 50%;">15,00%</div>
<div class="t" style="left:1068px;top:708px;width:78px;height:23px;line-height:23px;font-size:11.44px;color:#000;text-align:center;transform:scaleX(1.0219);transform-origin:50% 50%;">15,00%</div>
<div class="t" style="left:1146px;top:708px;width:77px;height:23px;line-height:23px;font-size:11.44px;color:#000;text-align:center;transform:scaleX(1.0219);transform-origin:50% 50%;">15,00%</div>
<div class="t" style="left:1223px;top:708px;width:78px;height:23px;line-height:23px;font-size:11.44px;color:#000;text-align:center;transform:scaleX(1.0219);transform-origin:50% 50%;">15,00%</div>
<div class="t" style="left:1301px;top:708px;width:77px;height:23px;line-height:23px;font-size:11.44px;color:#000;text-align:center;transform:scaleX(1.0219);transform-origin:50% 50%;">15,00%</div>
<div class="t" style="left:1378px;top:708px;width:78px;height:23px;line-height:23px;font-size:11.44px;color:#000;text-align:center;transform:scaleX(1.0219);transform-origin:50% 50%;">15,00%</div>
<div class="t" style="left:158px;top:731px;width:52px;height:23px;line-height:23px;font-size:11.44px;color:#2f5496;text-align:center;font-weight:700;transform:scaleX(1.0857);transform-origin:50% 50%;">12</div>
<div class="t" style="left:210px;top:731px;width:109px;height:23px;line-height:23px;font-size:11.44px;color:#2f5496;text-align:center;font-weight:700;transform:scaleX(0.9919);transform-origin:50% 50%;"><span style="font-size:10.92px">Driver Performance</span></div>
<div class="t" style="left:319px;top:731px;width:164px;height:23px;line-height:23px;font-size:11.44px;color:#2f5496;text-align:center;font-weight:700;transform:scaleX(1.0233);transform-origin:50% 50%;">Driver Safety Score</div>
<div class="t" style="left:483px;top:731px;width:43px;height:23px;line-height:23px;font-size:11.44px;color:#2f5496;text-align:center;font-weight:700;">Points</div>
<div class="t" style="left:526px;top:731px;width:77px;height:23px;line-height:23px;font-size:11.44px;color:#000;text-align:center;transform:scaleX(1.0536);transform-origin:50% 50%;">9,00</div>
<div class="t" style="left:603px;top:731px;width:78px;height:23px;line-height:23px;font-size:11.44px;color:#000;text-align:center;transform:scaleX(1.0536);transform-origin:50% 50%;">9,00</div>
<div class="t" style="left:681px;top:731px;width:77px;height:23px;line-height:23px;font-size:11.44px;color:#000;text-align:center;transform:scaleX(1.0536);transform-origin:50% 50%;">9,00</div>
<div class="t" style="left:758px;top:731px;width:78px;height:23px;line-height:23px;font-size:11.44px;color:#000;text-align:center;transform:scaleX(1.0536);transform-origin:50% 50%;">9,00</div>
<div class="t" style="left:836px;top:731px;width:77px;height:23px;line-height:23px;font-size:11.44px;color:#000;text-align:center;transform:scaleX(1.0536);transform-origin:50% 50%;">9,00</div>
<div class="t" style="left:913px;top:731px;width:78px;height:23px;line-height:23px;font-size:11.44px;color:#000;text-align:center;transform:scaleX(1.0536);transform-origin:50% 50%;">9,00</div>
<div class="t" style="left:991px;top:731px;width:77px;height:23px;line-height:23px;font-size:11.44px;color:#000;text-align:center;transform:scaleX(1.0536);transform-origin:50% 50%;">9,00</div>
<div class="t" style="left:1068px;top:731px;width:78px;height:23px;line-height:23px;font-size:11.44px;color:#000;text-align:center;transform:scaleX(1.0536);transform-origin:50% 50%;">9,00</div>
<div class="t" style="left:1146px;top:731px;width:77px;height:23px;line-height:23px;font-size:11.44px;color:#000;text-align:center;transform:scaleX(1.0536);transform-origin:50% 50%;">9,00</div>
<div class="t" style="left:1223px;top:731px;width:78px;height:23px;line-height:23px;font-size:11.44px;color:#000;text-align:center;transform:scaleX(1.0536);transform-origin:50% 50%;">9,00</div>
<div class="t" style="left:1301px;top:731px;width:77px;height:23px;line-height:23px;font-size:11.44px;color:#000;text-align:center;transform:scaleX(1.0536);transform-origin:50% 50%;">9,00</div>
<div class="t" style="left:1378px;top:731px;width:78px;height:23px;line-height:23px;font-size:11.44px;color:#000;text-align:center;transform:scaleX(1.0536);transform-origin:50% 50%;">9,00</div>
<div style="left:149px;top:192px;width:9px;height:25px;background:#f6f6f6;border:2px solid #1d7044;border-right-width:1px;"></div>
<div style="left:154px;top:213px;width:6px;height:6px;background:#1d7044;border:1px solid #f2f2f2;"></div>
<div style="left:1455px;top:105px;width:123px;height:686px;overflow:hidden">
<div style="left:0px;top:88px;width:20px;height:1px;background:#bdbdbd;"></div>
<div style="left:19px;top:58px;width:110px;height:30px;background:#c6d0ea;border:1px solid #1a1a1a;border-top-color:#4a4a4a;border-right:0;border-bottom:0;"></div>
<div class="t" style="left:50.2px;top:61px;width:100px;height:24px;line-height:24px;font-size:10.61px;color:#000;font-weight:700;transform:scaleX(0.9154);transform-origin:0 50%;">STARTING DATE</div>
<div style="left:19px;top:88px;width:101px;height:24px;background:#dce1f2;border:1px solid #1a1a1a;border-top-color:#9c9c9c;"></div>
<div style="left:120px;top:88px;width:3px;height:1px;background:#9c9c9c;"></div>
<div class="t" style="left:19.4px;top:88px;width:101px;height:24px;line-height:24px;font-size:10.98px;color:#000;text-align:center;font-weight:700;transform:scaleX(0.9222);transform-origin:50% 50%;">Year</div>
<div style="left:120px;top:111px;width:3px;height:1px;background:#222;"></div>
<div style="left:20px;top:124px;width:110px;height:218px;background:#d6dce6;box-shadow:0 0 4px rgba(0,0,0,.6);"></div>
<div class="t" style="left:24px;top:147.5px;width:140px;height:14px;line-height:14px;font-size:10.25px;color:#1a1a1a;font-weight:700;font-style:italic;transform:scaleX(0.9412);transform-origin:0 50%;">TARGET OR PREVIOUS YEAR</div>
<div class="t" style="left:24px;top:160.5px;width:140px;height:14px;line-height:14px;font-size:10.25px;color:#1a1a1a;font-weight:700;font-style:italic;transform:scaleX(0.9252);transform-origin:0 50%;">DATABASE</div>
<div class="t" style="left:24px;top:193px;width:8px;height:14px;line-height:14px;font-size:9px;color:#1a1a1a;">•</div>
<div class="t" style="left:24px;top:224px;width:8px;height:14px;line-height:14px;font-size:9px;color:#1a1a1a;">•</div>
<div class="t" style="left:24px;top:280px;width:8px;height:14px;line-height:14px;font-size:9px;color:#1a1a1a;">•</div>
<div class="t" style="left:33.5px;top:193px;width:140px;height:14px;line-height:14px;font-size:10.25px;color:#1a1a1a;font-style:italic;transform:scaleX(1.0438);transform-origin:0 50%;">Insert your metric values for each</div>
<div class="t" style="left:33.5px;top:205.5px;width:140px;height:14px;line-height:14px;font-size:10.25px;color:#1a1a1a;font-style:italic;transform:scaleX(1.0794);transform-origin:0 50%;">month </div>
<div class="t" style="left:67.32px;top:205.5px;width:140px;height:14px;line-height:14px;font-size:10.25px;color:#1a1a1a;font-style:italic;transform:scaleX(1.0469);transform-origin:0 50%;"><u>(only in white cells)</u></div>
<div class="t" style="left:33.5px;top:224px;width:140px;height:14px;line-height:14px;font-size:10.25px;color:#1a1a1a;font-style:italic;">The KPI Code, Group Name and</div>
<div class="t" style="left:33.5px;top:236.5px;width:140px;height:14px;line-height:14px;font-size:10.25px;color:#1a1a1a;font-style:italic;transform:scaleX(1.0560);transform-origin:0 50%;">Unit will appear just as entered</div>
<div class="t" style="left:33.5px;top:249.5px;width:140px;height:14px;line-height:14px;font-size:10.25px;color:#1a1a1a;font-style:italic;transform:scaleX(1.0386);transform-origin:0 50%;">in the KPI, Metric Info sheet</div>
<div class="t" style="left:33.5px;top:262px;width:140px;height:14px;line-height:14px;font-size:10.25px;color:#1a1a1a;font-style:italic;transform:scaleX(1.0914);transform-origin:0 50%;">automatically.</div>
<div class="t" style="left:33.5px;top:280.5px;width:140px;height:14px;line-height:14px;font-size:10.25px;color:#1a1a1a;font-style:italic;transform:scaleX(1.0364);transform-origin:0 50%;">You can enter your start year</div>
<div class="t" style="left:33.5px;top:293px;width:140px;height:14px;line-height:14px;font-size:10.25px;color:#1a1a1a;font-style:italic;transform:scaleX(1.0673);transform-origin:0 50%;">above to manipulate the month</div>
<div class="t" style="left:33.5px;top:306px;width:140px;height:14px;line-height:14px;font-size:10.25px;color:#1a1a1a;font-style:italic;transform:scaleX(1.0986);transform-origin:0 50%;">titles.</div>
<div class="t" style="left:59.78px;top:306px;width:140px;height:14px;line-height:14px;font-size:10.25px;color:#1a1a1a;font-style:italic;"><u>You can use this as a</u></div>
<div class="t" style="left:33.5px;top:319px;width:140px;height:14px;line-height:14px;font-size:10.25px;color:#1a1a1a;font-style:italic;transform:scaleX(1.0525);transform-origin:0 50%;"><u>target year or past year database</u></div>
</div>
<div style="left:1578px;top:105px;width:22px;height:686px;background:#f0ecec;"></div>
<div style="left:1585px;top:122px;width:9px;height:303px;background:#737373;border-radius:4.5px;"></div>
<svg style="left:1584.6px;top:109px" width="10" height="8" viewBox="0 0 10 8"><path d="M5 0.9L9.300 6.900H0.700z" fill="#6a6a6a" stroke="#6a6a6a" stroke-width="0.8" stroke-linejoin="round"/></svg>
<svg style="left:1584.6px;top:780px" width="10" height="8" viewBox="0 0 10 8"><path d="M5 7.100L9.300 1.100H0.700z" fill="#6a6a6a" stroke="#6a6a6a" stroke-width="0.8" stroke-linejoin="round"/></svg>
<div style="left:0px;top:791px;width:1600px;height:33px;background:#efe9e9;"></div>
<div style="left:1581px;top:104.5px;width:17.5px;height:688px;background:#f6f5f5;border-radius:8.75px;"></div>
<div style="left:1585px;top:122px;width:9px;height:303px;background:#737373;border-radius:4.5px;"></div>
<svg style="left:1584.6px;top:109px" width="10" height="8" viewBox="0 0 10 8"><path d="M5 0.9L9.300 6.900H0.700z" fill="#6a6a6a" stroke="#6a6a6a" stroke-width="0.8" stroke-linejoin="round"/></svg>
<svg style="left:1584.6px;top:780px" width="10" height="8" viewBox="0 0 10 8"><path d="M5 7.100L9.300 1.100H0.700z" fill="#6a6a6a" stroke="#6a6a6a" stroke-width="0.8" stroke-linejoin="round"/></svg>
<svg style="left:25px;top:800px" width="10" height="14" viewBox="0 0 10 14"><path d="M7.5 1.5L2 7l5.500 5.5" fill="none" stroke="#a8a8a8" stroke-width="1.15"/></svg>
<svg style="left:58.5px;top:800px" width="10" height="14" viewBox="0 0 10 14"><path d="M2.5 1.5L8 7l-5.500 5.5" fill="none" stroke="#3a3a3a" stroke-width="1.15"/></svg>
<div style="left:117.5px;top:795px;width:119px;height:25px;background:#bdbdbd;border-radius:5px;"></div>
<div class="t" style="left:128px;top:796px;width:119px;height:24px;line-height:24px;font-size:14.6px;color:#1f1f1f;transform:scaleX(0.9789);transform-origin:0 50%;">Metric_Settings</div>
<div style="left:246px;top:795px;width:125.5px;height:25px;background:#dde1f1;border-radius:5px;"></div>
<div class="t" style="left:256px;top:796px;width:125.5px;height:24px;line-height:24px;font-size:14.6px;color:#1f1f1f;transform:scaleX(0.9532);transform-origin:0 50%;">Actual_Database</div>
<div style="left:380.5px;top:791px;width:127px;height:28.5px;background:#fff;border-radius:0 0 6px 6px;box-shadow:0 1px 2px rgba(0,0,0,.12);"></div>
<div class="t" style="left:388.8px;top:794px;width:127px;height:24px;line-height:24px;font-size:14.6px;color:#111;transform:scaleX(0.9892);transform-origin:0 50%;">Target_Database</div>
<div style="left:389.5px;top:816px;width:110px;height:2px;background:#107c41;"></div>
<div style="left:517px;top:795px;width:139px;height:25px;background:#a9a9a9;border-radius:5px;"></div>
<div class="t" style="left:527px;top:796px;width:139px;height:24px;line-height:24px;font-size:14.6px;color:#1f1f1f;transform:scaleX(0.9694);transform-origin:0 50%;">Cumulative_Actual</div>
<div style="left:665px;top:795px;width:140px;height:25px;background:#a9a9a9;border-radius:5px;"></div>
<div class="t" style="left:676px;top:796px;width:140px;height:24px;line-height:24px;font-size:14.6px;color:#1f1f1f;transform:scaleX(0.9776);transform-origin:0 50%;">Cumulative_Target</div>
<div style="left:814px;top:795px;width:66px;height:25px;background:#7030a0;border-radius:5px 0 0 5px;overflow:hidden;"><div class="t" style="left:10.500px;top:1px;height:24px;line-height:24px;font-size:14.6px;color:#fff">Metric_Analysis</div></div>
<div style="left:241px;top:798px;width:1px;height:18px;background:#d9d3d3;"></div>
<div style="left:376px;top:798px;width:1px;height:18px;background:#d9d3d3;"></div>
<div style="left:512px;top:798px;width:1px;height:18px;background:#d9d3d3;"></div>
<div style="left:660px;top:798px;width:1px;height:18px;background:#d9d3d3;"></div>
<div style="left:809px;top:798px;width:1px;height:18px;background:#d9d3d3;"></div>
<div style="left:890.5px;top:805.5px;width:3px;height:3px;background:#333;border-radius:1.5px;"></div>
<div style="left:894.8px;top:805.5px;width:3px;height:3px;background:#333;border-radius:1.5px;"></div>
<div style="left:899.1px;top:805.5px;width:3px;height:3px;background:#333;border-radius:1.5px;"></div>
<svg style="left:923px;top:801px" width="12" height="12" viewBox="0 0 12 12"><path d="M6 0v12M0 6h12" stroke="#8a8a8a" stroke-width="1.1"/></svg>
<div style="left:962px;top:802px;width:2.4px;height:2.4px;background:#333;border-radius:1.2px;"></div>
<div style="left:962px;top:806.5px;width:2.4px;height:2.4px;background:#333;border-radius:1.2px;"></div>
<div style="left:962px;top:811px;width:2.4px;height:2.4px;background:#333;border-radius:1.2px;"></div>
<div style="left:980px;top:799px;width:599px;height:17px;background:#f6f5f5;border-radius:8.5px;"></div>
<svg style="left:985px;top:802px" width="8" height="11" viewBox="0 0 8 11"><path d="M0.8 5.5L7.2 1v9z" fill="#626262" stroke="#626262" stroke-width="0.8" stroke-linejoin="round"/></svg>
<svg style="left:1567px;top:802px" width="8" height="11" viewBox="0 0 8 11"><path d="M7.2 5.5L0.8 1v9z" fill="#626262" stroke="#626262" stroke-width="0.8" stroke-linejoin="round"/></svg>
<div style="left:997.5px;top:803px;width:305.5px;height:9px;background:#727272;border-radius:4.5px;"></div>
<div style="left:0px;top:824px;width:1600px;height:24px;background:#f5f5f5;"></div>
<div class="t" style="left:11.5px;top:825px;width:60px;height:22px;line-height:22px;font-size:11.3px;color:#3a3a3a;transform:scaleX(0.9184);transform-origin:0 50%;">Ready</div>
<div class="t" style="left:114px;top:825px;width:200px;height:22px;line-height:22px;font-size:11.3px;color:#222;font-weight:700;transform:scaleX(0.9405);transform-origin:0 50%;">Accessibility: Investigate</div>
<svg style="left:62.5px;top:829.5px" width="16" height="14" viewBox="0 0 16 14"><path d="M9 13.4H0.700V0.700H14.500V5.500M0.700 3.200H14.500" fill="none" stroke="#3a3a3a" stroke-width="1.3"/><path d="M2.800 6h2.400M2.800 8.300h1.700M2.800 10.600h1.500" stroke="#3a3a3a" stroke-width="1.1"/><circle cx="10" cy="9.200" r="4.300" fill="#f5f5f5" stroke="#3a3a3a" stroke-width="1.2"/><circle cx="10" cy="9.200" r="1.900" fill="#222"/></svg>
<svg style="left:96px;top:828px" width="16" height="16" viewBox="0 0 16 16"><circle cx="6.500" cy="2.600" r="1.700" fill="none" stroke="#3a3a3a" stroke-width="1.1"/><path d="M0.900 3.600c1.800 1.700 3.200 2.300 5.600 2.300s3.800-.6 5.600-2.300c.6.500.6 1.100 0 1.600-1.200 1-2.300 1.600-3.300 1.900v2.600M4.200 7.100C3.200 6.800 2.100 6.200.900 5.200c-.6-.5-.6-1.100 0-1.600M4.200 7.100v2.600l-1.600 4.500c.5.700 1.100.8 1.700.3l2.200-4.200 1 1.600" fill="none" stroke="#3a3a3a" stroke-width="1.1" stroke-linejoin="round"/><path d="M8.200 8.800l6.600 6.400M14.800 8.800l-6.600 6.400" stroke="#3a3a3a" stroke-width="1.1"/></svg>
<div style="left:1290px;top:825px;width:42px;height:22px;background:#dedede;"></div>
<svg style="left:1303.3px;top:828.7px" width="14.3" height="14.3" viewBox="0 0 14.3 14.3"><path d="M0.7 0.700v12.900M0.700 0.7h12.900" stroke="#3a3a3a" stroke-width="1.35"/><path d="M5.0 0.700v12.900M0.700 5.0h12.900" stroke="#3a3a3a" stroke-width="1.35"/><path d="M9.3 0.700v12.900M0.700 9.3h12.900" stroke="#3a3a3a" stroke-width="1.35"/><path d="M13.6 0.700v12.900M0.700 13.6h12.900" stroke="#3a3a3a" stroke-width="1.35"/></svg>
<svg style="left:1345.3px;top:828.7px" width="14.6" height="14.3" viewBox="0 0 14.6 14.3"><rect x="0.700" y="0.700" width="13.200" height="12.900" fill="none" stroke="#3a3a3a" stroke-width="1.3"/><rect x="3.400" y="2.900" width="7.800" height="8.500" fill="none" stroke="#3a3a3a" stroke-width="1.1"/><path d="M5 5h4.600M5 7.150h4.600M5 9.300h4.600" stroke="#3a3a3a" stroke-width="0.9"/></svg>
<svg style="left:1387px;top:828.7px" width="14.6" height="14.3" viewBox="0 0 14.6 14.3"><rect x="0.700" y="0.700" width="13.200" height="12.900" fill="none" stroke="#3a3a3a" stroke-width="1.3"/><path d="M4.900 0.700v6.600M9 0.700v6.600M0.700 7.800h8.600v-0.500" fill="none" stroke="#3a3a3a" stroke-width="1.2"/></svg>
<div class="t" style="left:1565.5px;top:825px;width:40px;height:22px;line-height:22px;font-size:11.3px;color:#444;transform:scaleX(0.9285);transform-origin:0 50%;">%85</div>
<div style="left:1434px;top:835px;width:104px;height:1px;background:#777;"></div>
<div style="left:1475px;top:829px;width:6px;height:13px;background:#555;"></div>
<div style="left:1486px;top:832px;width:1px;height:7px;background:#777;"></div>
<div style="left:1421px;top:835px;width:8px;height:1px;background:#555;"></div>
<div style="left:1543px;top:835px;width:9px;height:1px;background:#555;"></div>
<div style="left:1547px;top:831px;width:1px;height:9px;background:#555;"></div>
</body></html>
